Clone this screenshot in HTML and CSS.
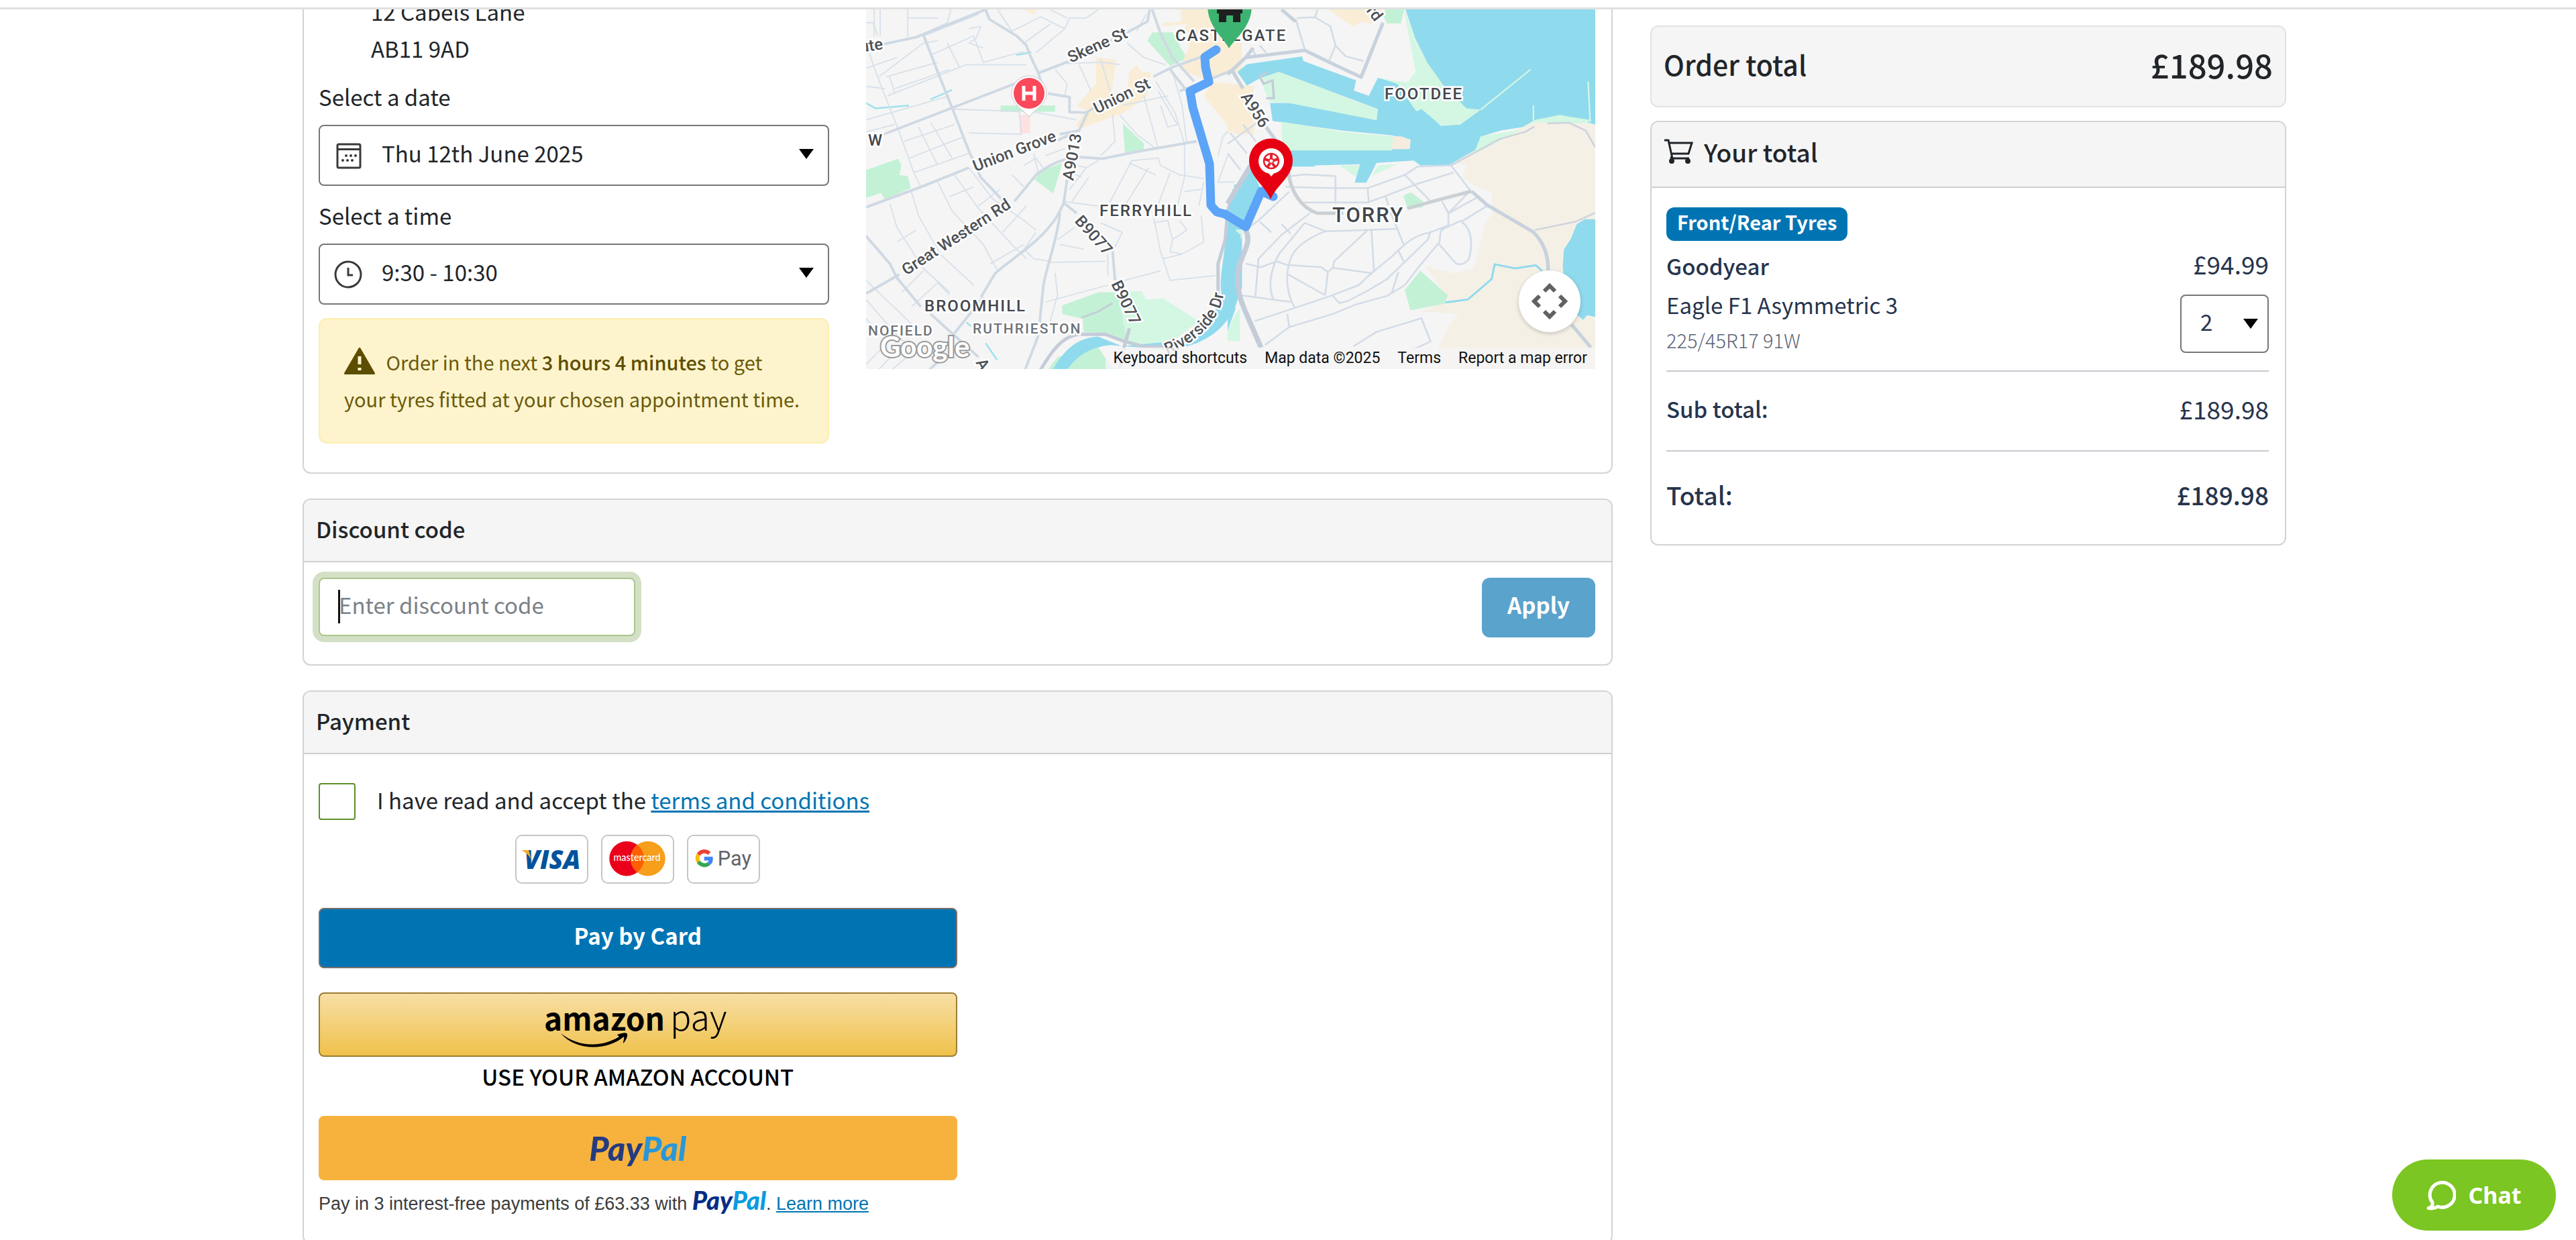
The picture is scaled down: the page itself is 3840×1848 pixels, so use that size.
FILE: index.html
```html
<!DOCTYPE html>
<html lang="en">
<head>
    <meta charset="UTF-8">
    <meta name="viewport" content="width=device-width, initial-scale=1.0">
    <title>Checkout</title>
    <link rel="stylesheet" href="styles.css">
</head>
<body>

    <header class="topbar"></header>

    <div class="page">
        <main class="checkout">

            <!-- Fitting appointment -->
            <section class="card appointment">
                <div class="appointment-form">
                    <address class="garage">12 Cabels Lane<br>AB11 9AD</address>

                    <label class="field-label" for="date">Select a date</label>
                    <div class="picker">
                        <svg class="picker-icon" viewBox="0 0 42 42" aria-hidden="true">
                            <rect x="5" y="4" width="34" height="35" rx="2" fill="none" stroke="#3a3a3a" stroke-width="3"/>
                            <path d="M5 11.500h34" stroke="#3a3a3a" stroke-width="3"/>
                            <g fill="#3a3a3a">
                                <circle cx="18" cy="21" r="2"/><circle cx="25" cy="21" r="2"/><circle cx="32" cy="21" r="2"/>
                                <circle cx="13" cy="28" r="2"/><circle cx="20" cy="28" r="2"/><circle cx="27" cy="28" r="2"/>
                            </g>
                        </svg>
                        <select id="date"><option>Thu 12th June 2025</option></select>
                        <svg class="picker-arrow" viewBox="0 0 22 15" aria-hidden="true"><path d="M0 0h22L11 15z"/></svg>
                    </div>

                    <label class="field-label" for="time">Select a time</label>
                    <div class="picker">
                        <svg class="picker-icon" viewBox="0 0 42 42" aria-hidden="true">
                            <circle cx="21" cy="21" r="19" fill="none" stroke="#3a3a3a" stroke-width="3"/>
                            <path d="M21 11v11h7" fill="none" stroke="#3a3a3a" stroke-width="3"/>
                        </svg>
                        <select id="time"><option>9:30 - 10:30</option></select>
                        <svg class="picker-arrow" viewBox="0 0 22 15" aria-hidden="true"><path d="M0 0h22L11 15z"/></svg>
                    </div>

                    <p class="notice">
                        <svg class="notice-icon" viewBox="0 0 46 40" aria-hidden="true">
                            <path d="M23 1.500 44.500 38.500H1.500z" fill="#5d4d00" stroke="#5d4d00" stroke-width="3" stroke-linejoin="round"/>
                            <path d="M23 13v12M23 30v4" stroke="#fdf4cd" stroke-width="5"/>
                        </svg>
                        Order in the next <strong>3 hours 4 minutes</strong> to get your tyres fitted at your chosen appointment time.
                    </p>
                </div>

                <div class="map">
                    <svg class="map-canvas" viewBox="1291 -10 1087 560" preserveAspectRatio="xMidYMid slice" role="img" aria-label="Route map of Aberdeen">
                        <rect x="1291" y="-10" width="1087" height="560" fill="#f5f5f5"/>

                        <!-- West side: land -->
                        <g transform="translate(1280) scale(.357143)">
                            <g fill="#c3f1d5">
                                <path d="M31 710 165 662 178 690 170 730 205 735 218 785 110 832 92 806 31 825z"/>
                                <path d="M592 440H820V466H592zM735 750 760 715 850 680 812 808zM1102 515 1192 600 1188 625 1112 636zM1225 135H1310L1370 245 1300 275 1205 170z"/>
                                <path d="M770 1568 830 1490 1000 1450 1080 1568z"/>
                            </g>
                            <path d="M850 1275 1000 1220 1180 1215 1200 1250 1270 1245 1420 1340 1290 1440 1130 1440 1040 1390 940 1385 935 1330 850 1310z" fill="#d3f7e2"/>
                            <path d="M850 1275 1000 1220 1080 1220 1120 1420 1040 1390 940 1385 935 1330 850 1310z" fill="#c3f1d5"/>
                            <g fill="#f9edd6">
                                <path d="M1340 30H1600V300L1440 330 1340 290 1380 190 1350 140 1370 100 1265 110 1275 95 1350 90z"/>
                                <path d="M1480 340 1650 360 1650 560 1570 560 1440 400z"/>
                                <path d="M990 240 1075 250 1055 390 1120 380 1130 300 1160 270 1180 300 1220 300 1205 400 1110 470 930 535 905 525 950 460 910 440 990 350z"/>
                                <path d="M665 30H750L730 60z"/>
                            </g>
                            <path d="M672 480H716V556H672z" fill="#fde1e1"/>
                            <path d="M1568 770C1560 850 1550 900 1530 950 1535 1060 1500 1150 1515 1230 1500 1320 1400 1400 1300 1425L1100 1445 1000 1405C900 1410 850 1470 800 1560H860C900 1490 960 1450 1050 1440L1300 1460C1440 1440 1530 1380 1575 1270L1600 1200V770z" fill="#90daee"/>
                            <path d="M658 230 720 218M300 415 390 375M31 430 70 452 210 440M530 1432 578 1502M450 1345 468 1362" stroke="#9fe2ee" stroke-width="7" fill="none"/>
                        </g>

                        <!-- West side: streets -->
                        <g transform="translate(1280) scale(.357143)" fill="none" stroke-linejoin="round">
                            <g stroke="#d7e0ea" stroke-width="5">
                                <path d="M31 95H60L80 150M65 40V150M90 40V150M205 40V155M205 75H330M270 140 370 95 385 40M31 175 60 270 110 400 165 540M31 285 160 240M31 360 110 370M85 320 270 180 330 170M270 150 500 60M300 230 480 150 520 260 690 215M370 180 420 280M120 400 450 270 700 270M115 320 330 260M150 370 380 290M130 320 150 390M31 500 380 400M31 550 150 520M165 540 230 720 260 780M190 590 400 520M210 660 440 570M230 720 460 640M250 530 330 690M300 510 390 660"/>
                                <path d="M580 40 640 130 760 70 860 120 880 75 950 75 1000 40M690 180 800 100M740 220 860 120M800 40 870 75M390 455 670 465 680 560 460 555M720 465 910 500M460 120 510 110 490 160 460 180 520 200M820 290 870 350 860 400M870 265 1020 260 1090 270M920 270 970 380M1010 250 1050 380M1160 130 1200 60M1120 180 1190 240 1280 270M1060 480 1070 590 1010 650M1090 480 1160 560 1240 620M1190 400 1250 620M1250 380 1330 520 1290 530 1260 440M1240 340 1320 470 1360 600M1310 300 1350 440 1370 600M1100 440 1290 400"/>
                                <path d="M130 850 160 950 270 1120 380 1220M220 800 250 900 340 1060 480 1190M330 760 390 880 520 1020 580 1130M400 730 500 870 640 1020 700 1080M460 700 560 830 690 920 740 960M600 970 700 860M550 1100 690 1020M380 820 480 780M500 860 590 790M240 960 160 1010M380 1230 330 1180 220 1280M270 1130 180 1220M31 1170 240 1370M31 1250 160 1400M31 1330 90 1400M31 1520 150 1400 200 1430M60 1568 160 1460M110 1568 200 1490M690 780 640 730M770 700 740 660 690 690M780 650 860 620M730 640 750 720"/>
                                <path d="M880 790 950 700 910 690M930 740 890 720M950 700 1000 670M890 840 960 740M850 840 1000 860M1010 930 1100 970 1060 1050M1040 860 1140 670 1250 660 1260 690 1340 730 1440 745M1130 680 1240 730M1210 700 1110 860M1300 720 1240 880M1360 600V740L1330 860M1360 800 1430 790M1440 760 1420 860M1230 900 1260 1050 1300 1170 1490 1150M1230 930 1290 920 1310 1000 1300 1050 1350 1060 1440 1010 1430 900M1270 1080 1350 1060M1340 920 1370 960 1310 1000M840 1020 940 1040M800 1095 1030 1090M820 1140 830 1230 800 1340M780 1260 1040 1190M1110 1170 1260 1130M900 950 830 1000M1040 1060V1150M740 970 690 1040 730 1080 800 1090M1530 40 1560 120M1540 650 1500 760 1568 760M1500 650 1520 570 1568 520"/>
                            </g>
                            <g stroke="#cfd9e3" stroke-width="11">
                                <path d="M100 185 240 155 530 40 545 80 660 150 700 190 715 230 750 305 880 255 1130 130M750 305 770 370M270 145 330 300 390 450 460 630 510 740 605 840M105 560 390 450 650 350M790 390 880 405V468L955 470 920 545 840 560M950 470 1060 400M31 865 260 780 460 700M830 585 900 555M650 840 740 730C790 690 850 660 920 655L1020 662 1150 635 1410 590M870 750 855 850 830 900C760 1010 650 1070 570 1140L510 1240M520 1240 400 1390M840 890C830 1000 780 1120 770 1200L750 1400 685 1568M860 850 910 890M1060 1050 1070 1170M31 985 130 1100 160 1160 260 1280M31 1225 170 1145M300 1310 500 1490M270 1568 330 1510M1215 40 1205 90 1130 130M1225 40 1260 140 1310 240 1400 340M1230 320 1310 280 1480 220M1300 290 1370 380M1340 380 1568 290"/>
                            </g>
                            <g stroke="#c4ccd8" stroke-width="14">
                                <path d="M1130 1370 1105 1460 1085 1568M745 1568C800 1470 850 1400 920 1395H1030L1110 1425 1190 1446H1300M1568 790 1540 880 1530 1000 1500 1100V1230"/>
                            </g>
                            <path d="M930 1325 1000 1300 1060 1265" stroke="#c4ccd8" stroke-width="8"/>
                        </g>

                        <!-- Harbour, Footdee and Torry -->
                        <g transform="translate(1830) scale(.3827 .357143)">
                            <path d="M0 350 80 420V480L0 560z" fill="#f9edd6"/>
                            <path d="M380 30H610L560 100 520 90 490 112z" fill="#f9edd6"/>
                            <path d="M605 60 620 30H690L675 98H620z" fill="#c3f1d5"/>
                            <path d="M1432 520 1330 500 1200 500 980 620 870 670 930 690 915 740 970 780 1030 800V890L1000 940 960 1120 880 1140 770 1110 800 1160 850 1230 850 1260 750 1300 900 1310 860 1360 820 1450V1568H1432z" fill="#f5f0e6"/>
                            <path d="M685 30 730 170 780 260 850 360 980 455 1180 290 1000 440 900 520H830L640 380 700 345 732 300z" fill="#d3f7e2"/>
                            <path d="M690 30H1432V520L1300 480 1200 500 1060 545 985 570 965 620 880 655 860 690H750L725 670 580 680 540 762H495L515 685 340 690V695H245V627H500L710 620 712 582 640 565 450 545 175 505 165 430 240 430 580 500 585 455 200 300 120 330 75 358 38 300 75 268 290 235 295 255 500 335 492 378 550 400 585 325 680 350 770 460 830 525 905 520 985 458 930 455 850 370 780 265 730 160z" fill="#90daee"/>
                            <path d="M130 325 200 300 585 457 580 502 240 430 165 425 145 380zM210 508 450 550 650 570 640 628H212zM435 690H515L500 738zM585 690 660 685 560 735zM30 958H55L60 985 50 1000zM0 1380 30 1310 48 1290V1425L0 1420z" fill="#d3f7e2"/>
                            <path d="M640 335 590 325 660 350 735 465 755 455 830 523 905 520 985 458 930 452 850 365z" fill="#d3f7e2"/>
                            <path d="M985 458 1180 290M1191 440V500M1404 340 1412 510" stroke="#d3f7e2" stroke-width="6" fill="none"/>
                            <path d="M870 660 980 570 1150 540 1200 500 1290 480 1410 500 1400 515 1200 510 985 630z" fill="#d3f7e2"/>
                            <path d="M860 690 965 625 985 570 1060 545 1150 530 1190 505 1120 490 900 530 800 690z" fill="#90daee"/>
                            <path d="M645 568 680 570 712 585 708 622H640z" fill="#f6ebdf"/>
                            <path d="M685 815 715 803 760 840 760 865 700 870zM690 1210 750 1130 858 1232 845 1268 712 1295z" fill="#c3f1d5"/>
                            <path d="M1432 915H1390L1360 935 1335 1000 1310 1040 1305 1110 1320 1280 1385 1335 1400 1315 1432 1322z" fill="#90daee"/>
                            <path d="M0 1380 30 1290 28 1180 55 1050 50 980 0 930zM90 700 130 790 70 930 30 925 0 890 20 800z" fill="#90daee"/>
                            <path d="M848 1262 935 1250 1028 1165 1040 1103 1120 1120 1200 1107 1225 1130" fill="none" stroke="#90daee" stroke-width="8"/>
                            <g fill="none" stroke-linejoin="round" stroke="#d3dce7" stroke-width="7">
                                <path d="M225 780 400 785H545L690 730 740 695 870 690 945 795 860 890M245 735 300 728 420 735V845M545 785 550 845M280 845H545L610 820 730 770 880 720M615 820 640 900 685 1020M690 730 790 840M240 800 120 920 70 960M320 890 210 980 120 1080 108 1235M300 930 380 965 540 960 660 955M380 965C300 1000 250 1040 240 1100 225 1150 230 1230 262 1285M300 930 200 1060C170 1120 155 1190 178 1250M545 960 415 1090 410 1115M560 955 570 1135M70 1100 130 1115 190 1090 230 1105 365 1115 390 1135 410 1118 565 1140M390 1135 380 1232M235 1145 380 1232M835 840 860 890V940L790 970C720 980 680 1030 640 1070L560 1140 510 1190 400 1235 262 1285 105 1340M860 940 830 965 825 1010 740 1120 690 1190 620 1235 500 1270 410 1310 240 1365 145 1440M830 960 910 920M910 925C960 960 950 1040 940 1080Q920 1110 890 1100L820 1015M1010 860 910 925M970 825 860 890M665 1045 685 1090M790 965 780 1000 620 1165 550 1210 470 1255 435 1265 410 1235M665 1135 640 1220M50 1232 245 1260M232 1310 240 1365M125 925 170 970M210 935 245 975M490 1445 580 1385 755 1328 790 1425 720 1460M10 555 75 640M60 520 110 590M0 600 130 500M0 640 50 710"/>
                                <path d="M270 75 340 72 400 110 420 190 395 255M340 72 350 40M420 190 460 235 530 255M265 80 300 205M95 200 110 235M125 190 150 220"/>
                                <path d="M870 690 1060 580 1160 550 1195 528M1245 515 1330 512 1395 545 1432 615M1195 960 1355 925 1432 888" stroke="#cdd3dc"/>
                            </g>
                            <g fill="none" stroke-linejoin="round" stroke="#c8d2dd" stroke-width="14">
                                <path d="M0 310 70 240 300 210 400 262 520 322 605 95M70 240 100 200M210 40 265 90M15 290 60 370M150 530 210 620M950 798 1010 855 1190 968C1230 1010 1250 1060 1248 1130M1340 1355 1415 1450"/>
                                <path d="M235 700C240 800 290 870 350 890H450M700 870 835 830 950 798" stroke="#cad0d4"/>
                                <path d="M70 960C95 1010 60 1050 45 1110 30 1180 45 1240 65 1290L130 1450M90 690 0 850" stroke="#c4ccd8" stroke-width="20"/>
                                <path d="M155 300 125 320 140 350 175 335 180 410 150 410" stroke="#c5ccd4" stroke-width="9"/>
                            </g>
                        </g>

                        <!-- Route -->
                        <path d="M1813 74 1796 85 1797 100 1802 122 1774 136 1778 160 1803 244 1805 306 1814 316 1826 319 1857 338 1880 285 1898 293" fill="none" stroke="#5ba4f8" stroke-width="13" stroke-linejoin="round" stroke-linecap="round"/>

                        <!-- Labels -->
                        <g class="map-labels">
                            <text transform="translate(1596 94) rotate(-24)">Skene St</text>
                            <text transform="translate(1635 170) rotate(-26)">Union St</text>
                            <text transform="translate(1454 256) rotate(-21)">Union Grove</text>
                            <text transform="translate(1600 270) rotate(-80)">A9013</text>
                            <text transform="translate(1351 411) rotate(-33)">Great Western Rd</text>
                            <text transform="translate(1601 330) rotate(48)">B9077</text>
                            <text transform="translate(1656 423) rotate(64)">B9077</text>
                            <text transform="translate(1849 144) rotate(58)">A956</text>
                            <text transform="translate(1283 78) rotate(-8)">ute</text>
                            <text transform="translate(2036 16) rotate(52)">rd</text>
                            <text transform="translate(1454 540) rotate(60)">A</text>
                            <path id="riverside" d="M1740 528C1780 512 1822 480 1825 430" fill="none" stroke="none"/>
                            <text><textPath href="#riverside">Riverside Dr</textPath></text>
                            <g class="map-district">
                                <text x="1294" y="217">W</text>
                                <text x="1639" y="322">FERRYHILL</text>
                                <text x="1378" y="464">BROOMHILL</text>
                                <text x="1752" y="61">CASTLEGATE</text>
                                <text x="2064" y="148">FOOTDEE</text>
                                <text class="map-town" x="1986" y="331">TORRY</text>
                                <text class="map-minor" x="1450" y="497">RUTHRIESTON</text>
                                <text class="map-minor" x="1294" y="500">NOFIELD</text>
                            </g>
                        </g>

                        <!-- Hospital -->
                        <path d="M1534 174C1526 164 1508 156 1508 139a26 26 0 0 1 52 0C1560 156 1542 164 1534 174z" fill="#fff" stroke="#ccc" stroke-width="1"/>
                        <circle cx="1534" cy="139" r="23" fill="#f9495b"/>
                        <path d="M1526 128v22M1542 128v22M1526 139h16" stroke="#fff" stroke-width="5"/>

                        <!-- Start and garage pins -->
                        <path d="M1832 72C1824 56 1800 40 1800 8a32 32 0 0 1 66 0C1866 40 1842 56 1832 72z" fill="#3cb371"/>
                        <path d="M1814 14h38v6h-3v13h-11V23h-10v10h-11V20h-3z" fill="#1f1f1f"/>
                        <path d="M1894 297C1885 275 1862 264 1862 239a32 32 0 0 1 65 0C1927 264 1903 275 1894 297z" fill="#e60012"/>
                        <circle cx="1895" cy="240" r="19" fill="#fff"/>
                        <path d="M1890 257h10l-5 6z" fill="#fff"/>
                        <circle cx="1895" cy="240" r="11" fill="none" stroke="#e3202e" stroke-width="2.500"/>
                        <circle cx="1895" cy="240" r="3.500" fill="none" stroke="#e3202e" stroke-width="2"/>
                        <path d="M1895 230v6M1885 237l6 2M1905 237l-6 2M1889 249l4-5M1901 249l-4-5" stroke="#e3202e" stroke-width="4"/>

                        <text class="map-logo" x="1312" y="532">Google</text>
                    </svg>

                    <button class="map-pan" type="button" aria-label="Map camera controls">
                        <svg viewBox="0 0 54 54" aria-hidden="true">
                            <path d="M19 12l8-8 8 8M42 19l8 8-8 8M35 42l-8 8-8-8M12 35l-8-8 8-8" fill="none" stroke="#616161" stroke-width="6"/>
                        </svg>
                    </button>

                    <div class="map-footer">
                        <button type="button">Keyboard shortcuts</button>
                        <span>Map data ©2025</span>
                        <a href="#">Terms</a>
                        <a href="#">Report a map error</a>
                    </div>
                </div>
            </section>

            <!-- Discount code -->
            <section class="card">
                <h2 class="card-header">Discount code</h2>
                <form class="discount">
                    <div class="discount-field">
                        <input class="discount-input" type="text" placeholder="Enter discount code" aria-label="Discount code">
                        <span class="caret"></span>
                    </div>
                    <button class="btn-apply" type="button">Apply</button>
                </form>
            </section>

            <!-- Payment -->
            <section class="card">
                <h2 class="card-header">Payment</h2>
                <div class="payment">
                    <div class="terms">
                        <input type="checkbox" id="terms">
                        <label for="terms">I have read and accept the <a href="#">terms and conditions</a></label>
                    </div>

                    <div class="pay-methods">
                        <div class="card-types">
                            <svg class="card-type" viewBox="0 0 108 72" role="img" aria-label="Visa">
                                <text class="visa" x="55" y="51" text-anchor="middle">VISA</text>
                                <path d="M6 22h12l5 16C19 30 14 25 6 22z" fill="#f7a823"/>
                            </svg>
                            <svg class="card-type" viewBox="0 0 108 72" role="img" aria-label="Mastercard">
                                <circle cx="37" cy="35" r="27" fill="#eb001b"/>
                                <circle cx="70" cy="35" r="27" fill="#f79e1b"/>
                                <path d="M53.500 13.600a27 27 0 0 1 0 42.800a27 27 0 0 1 0-42.800z" fill="#ff5f00"/>
                                <text class="mastercard" x="53" y="39" text-anchor="middle">mastercard</text>
                            </svg>
                            <svg class="card-type" viewBox="0 0 108 72" role="img" aria-label="Google Pay">
                                <g fill="none" stroke-width="6">
                                    <path d="M32 27A11 11 0 0 0 15 29" stroke="#ea4335"/>
                                    <path d="M15 29a11 11 0 0 0 0 11" stroke="#fbbc04"/>
                                    <path d="M15 40a11 11 0 0 0 16 3" stroke="#34a853"/>
                                    <path d="M31 43q4-3 3.500-8H24" stroke="#4285f4"/>
                                </g>
                                <text class="gpay" x="45" y="46">Pay</text>
                            </svg>
                        </div>

                        <button class="pay-button pay-card" type="button">Pay by Card</button>

                        <button class="pay-button pay-amazon" type="button" aria-label="Amazon Pay">
                            <svg viewBox="0 0 280 72" aria-hidden="true">
                                <text class="amazon-name" x="0" y="45">amazon</text>
                                <text class="amazon-pay" x="188" y="45">pay</text>
                                <path d="M25 49C50 69 84 71 112 54L109 51C120 47 123 48 124 50 125 54 121 61 118 64 118 60 120 56 119 54 94 75 48 76 25 49z"/>
                            </svg>
                        </button>
                        <p class="amazon-note">USE YOUR AMAZON ACCOUNT</p>

                        <button class="pay-button pay-paypal" type="button"><span class="paypal">Pay<b>Pal</b></span></button>
                        <p class="pay-later">Pay in 3 interest-free payments of £63.33 with <span class="paypal">Pay<b>Pal</b></span>. <a href="#">Learn more</a></p>
                    </div>
                </div>
            </section>
        </main>

        <!-- Order summary -->
        <aside class="summary">
            <div class="order-total">
                <span>Order total</span>
                <strong>£189.98</strong>
            </div>

            <section class="card">
                <h2 class="card-header basket-header">
                    <svg viewBox="0 0 44 38" aria-hidden="true">
                        <path d="M1 2h6l6 27h25M9 6h33l-5 16H12M13 29l-3-2" fill="none" stroke="#212529" stroke-width="3"/>
                        <circle cx="12" cy="33" r="4" fill="#212529"/><circle cx="36" cy="33" r="4" fill="#212529"/>
                    </svg>
                    Your total
                </h2>
                <div class="basket">
                    <span class="badge">Front/Rear Tyres</span>
                    <div class="item">
                        <div>
                            <h3 class="item-brand">Goodyear</h3>
                            <p class="item-model">Eagle F1 Asymmetric 3</p>
                            <p class="item-size">225/45R17 91W</p>
                        </div>
                        <div class="item-price">
                            <span class="amount">£94.99</span>
                            <div class="picker quantity">
                                <select aria-label="Quantity"><option>2</option></select>
                                <svg class="picker-arrow" viewBox="0 0 22 15" aria-hidden="true"><path d="M0 0h22L11 15z"/></svg>
                            </div>
                        </div>
                    </div>
                    <div class="total-row"><strong>Sub total:</strong><span class="amount">£189.98</span></div>
                    <div class="total-row grand-total"><strong>Total:</strong><strong>£189.98</strong></div>
                </div>
            </section>
        </aside>
    </div>

    <button class="chat" type="button">
        <svg viewBox="0 0 44 46" aria-hidden="true">
            <path d="M9 34A18.500 18.500 0 1 1 17 40Q11 44 3 42.500 10 41 9 34z" fill="none" stroke="#fff" stroke-width="5" stroke-linejoin="round"/>
        </svg>
        Chat
    </button>

</body>
</html>
```
FILE: styles.css
```css
* {
    box-sizing: border-box;
}

body {
    margin: 0;
    font-family: "Noto Sans CJK SC", "Noto Sans", sans-serif;
    font-size: 33px;
    line-height: 55px;
    color: #212529;
    background: #fff;
    overflow: hidden;
}

h2, h3, p {
    margin: 0;
}

button, select, input {
    font: inherit;
    color: inherit;
    margin: 0;
}

button {
    cursor: pointer;
}

a {
    color: #0074b3;
}

.topbar {
    position: sticky;
    top: 0;
    z-index: 10;
    height: 14px;
    background: #fff;
    border-bottom: 3px solid #dfe1df;
}

/* page content is scrolled a little under the top bar */
.page {
    display: grid;
    grid-template-columns: minmax(0, 1fr) 948px;
    gap: 56px;
    align-items: start;
    margin-top: -48px;
    padding: 0 432px 0 451px;
}

.checkout {
    display: grid;
    gap: 37px;
}

.card {
    border: 2px solid #d3d3d3;
    border-radius: 12px;
    overflow: hidden;
}

.card-header {
    padding: 16px 18px 21px;
    font-size: 33px;
    font-weight: 500;
    line-height: 54px;
    background: #f5f5f5;
    border-bottom: 2px solid #cfcfcf;
}

/* Appointment */
.appointment {
    display: grid;
    grid-template-columns: 7fr 10fr;
    gap: 55px;
    padding: 22px 24px 43px 22px;
}

.garage {
    padding-left: 78px;
    font-style: normal;
}

.field-label {
    display: block;
    margin: 17px 0 14px;
}

.picker {
    position: relative;
}

.picker select {
    display: block;
    width: 100%;
    height: 91px;
    padding: 0 92px 6px;
    border: 2px solid #777;
    border-radius: 8px;
    background: #fff;
    appearance: none;
}

.picker-icon {
    position: absolute;
    left: 23px;
    top: 25px;
    width: 42px;
    height: 42px;
}

.picker-arrow {
    position: absolute;
    right: 23px;
    top: 36px;
    width: 22px;
    height: 15px;
}

.notice {
    margin-top: 20px;
    padding: 36px;
    min-height: 187px;
    font-size: 29px;
    color: #6b5a0a;
    background: #fdf4cd;
    border: 2px solid #fdedae;
    border-radius: 12px;
}

.notice strong {
    font-weight: 500;
    color: #5d4d00;
}

.notice-icon {
    width: 46px;
    height: 40px;
    margin-right: 10px;
    vertical-align: -6px;
}

/* Map */
.map {
    position: relative;
    height: 560px;
    overflow: hidden;
}

.map-canvas {
    display: block;
    width: 100%;
    height: 100%;
}

.map-labels {
    font-family: Roboto, sans-serif;
    font-size: 24px;
    font-weight: 500;
    fill: #4d5156;
    stroke: #fff;
    stroke-width: 5px;
    paint-order: stroke;
}

.map-district {
    letter-spacing: 2px;
    fill: #43474c;
}

.map-town {
    font-size: 31px;
}

.map-minor {
    font-size: 21px;
    fill: #6d7278;
}

.map-logo {
    font-family: Lato, sans-serif;
    font-size: 42px;
    font-weight: 700;
    fill: #fff;
    stroke: #9a9a9a;
    stroke-width: 4px;
    paint-order: stroke;
}

.map-pan {
    position: absolute;
    right: 22px;
    bottom: 55px;
    display: grid;
    place-items: center;
    width: 92px;
    height: 92px;
    padding: 0;
    border: 0;
    border-radius: 50%;
    background: #fff;
    box-shadow: 0 2px 6px rgba(0, 0, 0, 0.2);
}

.map-pan svg {
    width: 54px;
    height: 54px;
}

.map-footer {
    position: absolute;
    right: 0;
    bottom: 0;
    display: flex;
    gap: 26px;
    padding: 0 12px;
    font-family: Roboto, sans-serif;
    font-size: 23px;
    line-height: 32px;
    color: #111;
    background: rgba(245, 245, 245, 0.8);
}

.map-footer button {
    padding: 0;
    border: 0;
    background: none;
}

.map-footer a {
    color: inherit;
    text-decoration: none;
}

/* Discount code */
.discount {
    display: flex;
    justify-content: space-between;
    padding: 23px 24px 40px 22px;
}

.discount-field {
    position: relative;
}

.discount-input {
    display: block;
    width: 472px;
    height: 87px;
    padding: 0 28px 8px;
    border: 2px solid #a9c78b;
    border-radius: 8px;
    outline: 0;
    box-shadow: 0 0 0 9px #d4e0c6;
}

.discount-input::placeholder {
    color: #7b8187;
    opacity: 1;
}

.caret {
    position: absolute;
    left: 29px;
    top: 18px;
    width: 3px;
    height: 50px;
    background: #111;
}

.btn-apply {
    width: 169px;
    height: 89px;
    padding: 0 0 8px;
    border: 0;
    border-radius: 12px;
    font-weight: 700;
    color: #fff;
    background: #5aa3cd;
}

/* Payment */
.payment {
    padding: 41px 24px 30px 22px;
}

.pay-methods {
    width: 50%;
}

.terms {
    display: flex;
    align-items: center;
    gap: 32px;
}

.terms input {
    width: 55px;
    height: 55px;
    margin: 0;
    border: 2px solid #5f8f2a;
    border-radius: 4px;
    background: #fff;
    appearance: none;
}

.terms label {
    padding-bottom: 4px;
}

.card-types {
    display: flex;
    justify-content: center;
    gap: 19px;
    margin: 20px 0 36px;
}

.card-type {
    width: 109px;
    height: 73px;
    border: 2px solid #c6c6c6;
    border-radius: 10px;
}

.visa {
    font: italic 800 40px "Open Sans", sans-serif;
    fill: #00529b;
}

.mastercard {
    font: 500 15px Lato, sans-serif;
    fill: #fff;
}

.gpay {
    font: 400 32px Roboto, sans-serif;
    fill: #5f6368;
}

.pay-button {
    display: flex;
    align-items: center;
    justify-content: center;
    width: 100%;
    height: 96px;
    padding: 0;
    border: 2px solid #7a6f6a;
    border-radius: 8px;
}

.pay-card {
    height: 90px;
    padding-bottom: 8px;
    font-weight: 700;
    color: #fff;
    background: #0074b3;
}

.pay-amazon {
    margin-top: 36px;
    border-color: #9c7e31;
    background: linear-gradient(#f7dfa5, #f0c14b);
}

.pay-amazon svg {
    width: 280px;
    height: 72px;
}

.amazon-name {
    font-size: 46px;
    font-weight: 700;
}

.amazon-pay {
    font-size: 52px;
    font-weight: 300;
}

.amazon-note {
    margin-bottom: 31px;
    padding-top: 2px;
    font-weight: 500;
    text-align: center;
    color: #000;
}

.pay-paypal {
    border-color: #f7b440;
    background: #f7b23e;
}

.paypal {
    font-family: Lato, sans-serif;
    font-size: 38px;
    font-style: italic;
    font-weight: 900;
    line-height: 1;
    color: #062c86;
}

.paypal b {
    font-weight: 900;
    color: #0a9be0;
}

.pay-paypal .paypal {
    font-size: 50px;
    color: #253b80;
}

.pay-paypal .paypal b {
    color: #2997d8;
}

.pay-later {
    margin-top: 8px;
    font-family: "Liberation Sans", Arial, sans-serif;
    font-size: 27px;
    color: #3c3c3c;
}

/* Order summary */
.summary {
    display: grid;
    gap: 20px;
    padding-top: 72px;
}

.order-total {
    display: flex;
    align-items: center;
    justify-content: space-between;
    height: 122px;
    padding: 0 18px 8px;
    font-size: 41px;
    font-weight: 500;
    background: #f5f5f5;
    border: 2px solid #e2e2e2;
    border-radius: 12px;
}

.order-total strong {
    font-size: 49px;
    font-weight: 500;
}

.basket-header {
    display: flex;
    align-items: center;
    gap: 16px;
    padding: 17px 18px 25px;
    font-size: 37px;
}

.basket-header svg {
    width: 44px;
    height: 38px;
}

.basket {
    padding: 29px 24px 22px 22px;
    color: #26344d;
}

.badge {
    display: block;
    width: fit-content;
    padding: 0 16px 8px;
    font-size: 29px;
    font-weight: 700;
    line-height: 42px;
    color: #fff;
    background: #0074b3;
    border-radius: 12px;
}

.item {
    display: flex;
    justify-content: space-between;
    padding: 7px 0 21px;
    border-bottom: 2px solid #c6cad0;
}

.item-brand {
    font-size: 33px;
    font-weight: 500;
    line-height: 61px;
}

.item-size {
    font-size: 29px;
    font-weight: 300;
    line-height: 49px;
    color: #5b6577;
}

.item-price {
    text-align: right;
}

.amount {
    font-size: 37px;
}

.quantity {
    width: 132px;
    margin-top: 16px;
}

.quantity select {
    height: 87px;
    padding: 0 28px 6px;
}

.quantity .picker-arrow {
    right: 16px;
}

.total-row {
    display: flex;
    align-items: center;
    justify-content: space-between;
    height: 119px;
    padding-bottom: 6px;
    border-bottom: 2px solid #c6cad0;
}

.total-row strong {
    font-weight: 500;
}

.grand-total {
    height: 116px;
    padding: 12px 0 0;
    border: 0;
    font-size: 37px;
}

/* Chat */
.chat {
    position: fixed;
    right: 30px;
    bottom: 14px;
    display: flex;
    align-items: center;
    justify-content: center;
    gap: 18px;
    width: 244px;
    height: 106px;
    border: 0;
    border-radius: 53px;
    font-family: "Noto Sans", sans-serif;
    font-size: 34px;
    font-weight: 700;
    color: #fff;
    background: #7bc622;
}

.chat svg {
    width: 44px;
    height: 46px;
}
```
